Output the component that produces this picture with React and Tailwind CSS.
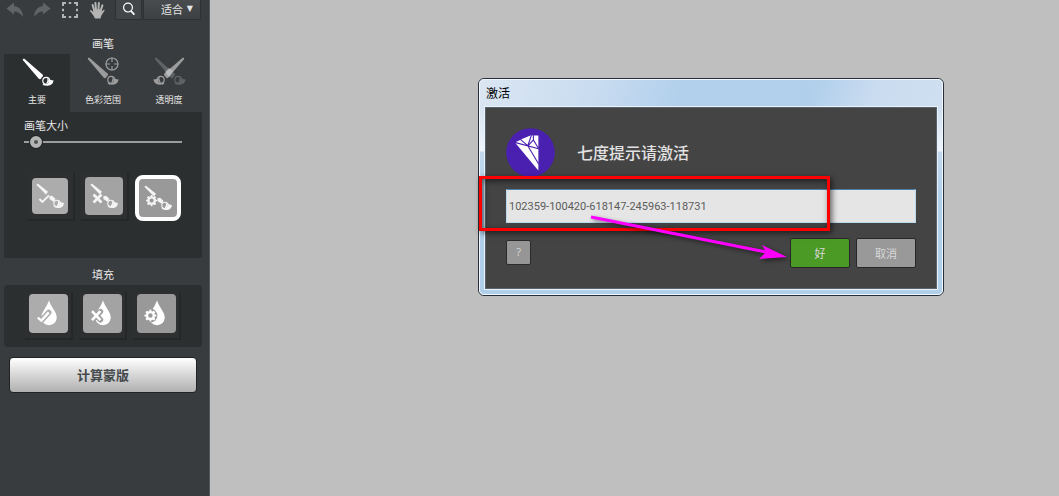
import React, { useState } from 'react';

function Brush({ className = '' }) {
  return (
    <g className={className}>
      <path d="M0.8 2 Q0.6 0.4 2.4 0.8 L20.8 16.8 Q21.4 17.6 20.6 18.6 L18.6 21 Q17.8 21.6 16.8 20.8 Z" fill="currentColor" />
      <path d="M26.6 20.2 Q28.2 22.6 31.6 22.6 Q30.8 27.4 25.6 27.8 Q22.6 27.8 20.4 27 L22 25.4 Q25.6 27 27.2 24.2 Z" fill="currentColor" />
      <circle cx="24.2" cy="22.8" r="3.4" fill="none" stroke="currentColor" strokeWidth="1.2" />
      <path d="M24.8 20 Q26.4 22.4 24 25.6 Q26.8 25.4 27 22.8 Q26.8 20.8 24.8 20 Z" fill="currentColor" />
    </g>
  );
}

const GEAR = 'M7 0h2l.4 2 1.5.6L12.6 1.4 14.6 3.4 13.4 5.1 14 6.6l2 .4v2l-2 .4-.6 1.5 1.2 1.7-2 2-1.7-1.2-1.5.6L9 16H7l-.4-2-1.5-.6-1.7 1.2-2-2 1.2-1.7L2 9.4 0 9V7l2-.4.6-1.5L1.4 3.4l2-2 1.7 1.2L6.6 2ZM8 5a3 3 0 1 0 0 6 3 3 0 0 0 0-6Z';

function Mark({ kind }) {
  if (kind === 'check') return <path d="M1.4 6 L4.4 9 L11 2.4" fill="none" stroke="currentColor" strokeWidth="1.8" />;
  if (kind === 'cross') return <path d="M1.5 1.5 L9.5 9.5 M9.5 1.5 L1.5 9.5" fill="none" stroke="currentColor" strokeWidth="2.6" />;
  return <path d={GEAR} transform="scale(0.7)" fill="currentColor" fillRule="evenodd" />;
}

function BrushMark({ kind }) {
  return (
    <svg viewBox="0 0 30 28" className="w-[30px] h-7 shrink-0 text-[#f5f5f5]" aria-hidden="true">
      <path d="M1.6 3 Q1.8 1.4 3.4 2 L13 9.8 L11 12.4 Z" fill="currentColor" />
      <path d="M14.4 14.2 L17 13.8 L20.4 16.8 Q20 18.8 18.4 19.8 L14.4 17 Z" fill="currentColor" />
      <path d="M24.6 19.6 Q26 21 29 21 Q28.4 25.4 24.4 26 Q21 26.2 18.6 24.8 L20 23.6 Q23.6 25 25 22.6 Z" fill="currentColor" />
      <circle cx="22" cy="21.4" r="3.2" fill="none" stroke="currentColor" strokeWidth="1.1" />
      <path d="M22.6 18.8 Q24 21.4 21.8 24 Q24.8 24 24.8 21.4 Q24.6 19.4 22.6 18.8 Z" fill="currentColor" />
      <g transform="translate(3 11)">
        <Mark kind={kind} />
      </g>
    </svg>
  );
}

function DropMark({ kind }) {
  return (
    <svg viewBox="0 0 24 26" className="w-6 h-[26px] text-white" aria-hidden="true">
      <path d="M13 0.5 Q14.5 5 18.4 10.8 Q21 14.6 20.8 17.8 Q20 24.6 13 25.2 Q6 24.6 5.2 17.8 Q5 14.6 7.6 10.8 Q11.5 5 13 0.5 Z" fill="currentColor" />
      {kind === 'check' && (
        <>
          <path d="M2.4 17.4 L5.6 20.4 L12.8 12.4" fill="none" stroke="#acacac" strokeWidth="5.4" strokeLinecap="round" strokeLinejoin="round" />
          <path d="M1.8 17.6 L5.4 20.6 L12.8 12.4" fill="none" stroke="#fff" strokeWidth="2.4" />
        </>
      )}
      {kind === 'cross' && (
        <>
          <path d="M2.6 11.6 L10.4 19.8 M10.4 11.6 L2.6 19.8" fill="none" stroke="#a3a3a3" strokeWidth="5.6" strokeLinecap="round" />
          <path d="M2 11.2 L10.4 20.2 M10.4 11.2 L2 20.2" fill="none" stroke="#fff" strokeWidth="2.6" />
        </>
      )}
      {kind === 'gear' && (
        <>
          <circle cx="6.4" cy="15.6" r="7" fill="#999" />
          <path d={GEAR} transform="translate(0.4 9.6) scale(0.75)" fill="#fff" fillRule="evenodd" />
        </>
      )}
    </svg>
  );
}

function Toolbar() {
  return (
    <div className="flex h-5 pl-[6px] text-[#b4b4b4]">
      <button aria-label="撤销" className="w-[18px] text-[#606466]">
        <svg viewBox="0 0 18 16" className="w-[18px] h-4">
          <path d="M0.5 6.5 L8 0.5 V4 Q16.5 5 17 15 Q13.5 9.4 8 9.4 V12.6 Z" fill="currentColor" />
        </svg>
      </button>
      <button aria-label="重做" className="w-[18px] ml-[9px] text-[#606466]">
        <svg viewBox="0 0 18 16" className="w-[18px] h-4">
          <path d="M17.5 6.5 L10 0.5 V4 Q1.5 5 1 15 Q4.5 9.4 10 9.4 V12.6 Z" fill="currentColor" />
        </svg>
      </button>
      <button aria-label="选框" className="w-4 ml-[11px]">
        <svg viewBox="0 0 16 16" className="w-4 h-4">
          <path d="M1 4 V1 H4 M12 1 H15 V4 M15 12 V15 H12 M4 15 H1 V12 M6.8 1 H9.2 M6.8 15 H9.2 M1 6.8 V9.2 M15 6.8 V9.2" fill="none" stroke="currentColor" strokeWidth="2" />
        </svg>
      </button>
      <button aria-label="抓手" className="w-4 ml-[11px]">
        <svg viewBox="0 0 16 17" className="w-4 h-[17px]">
          <path d="M5.2 8.5 L3.6 3 M7 8 L6.4 1 M9.4 8 L9.9 1 M11.6 9 L13.4 3.4" stroke="currentColor" strokeWidth="2" strokeLinecap="round" />
          <path d="M4 7.5 H12.6 L12.8 9.6 L14.4 8 Q15.8 7.2 15.6 8.4 L12.4 13.6 L11.4 16.6 H6 L4.4 13.6 L1 9 Q0.8 7.8 2.2 8.2 L4.4 10 Z" fill="currentColor" />
        </svg>
      </button>
      <button aria-label="缩放" className="flex w-[27px] ml-2.5 justify-center border-x border-b border-[#2e3132] bg-[#424648] rounded-b-xs text-white">
        <svg viewBox="0 0 14 16" className="w-3.5 h-4">
          <circle cx="6" cy="7.6" r="4.4" fill="none" stroke="currentColor" strokeWidth="1.2" />
          <path d="M9 11 L12.4 14.6" stroke="currentColor" strokeWidth="1.8" />
        </svg>
      </button>
      <label className="grid w-[58px] ml-px border-x border-b border-[#2e3132] bg-gradient-to-b from-[#484c4e] to-[#3d4143] rounded-b-xs text-[#e6e6e6]">
        <select aria-label="缩放比例" className="col-start-1 row-start-1 appearance-none bg-transparent h-[18px] pl-[17px] text-[11px] outline-none">
          <option>适合</option>
        </select>
        <span className="col-start-1 row-start-1 justify-self-end pr-[7px] font-['DejaVu_Sans',sans-serif] text-[8px] leading-[18px] pointer-events-none">▼</span>
      </label>
    </div>
  );
}

function Tab({ label, active, onClick, children }) {
  return (
    <button
      role="tab"
      aria-selected={active}
      onClick={onClick}
      className={`flex flex-1 flex-col items-center h-[58px] pt-[3px] ${active ? 'bg-[#2c2f30]' : ''}`}
    >
      <svg viewBox="0 0 34 30" className={`w-[34px] h-[30px] ${active ? 'text-white' : 'text-[#9c9c9c]'}`} aria-hidden="true">
        {children}
      </svg>
      <span className="mt-[5px] text-[9px] leading-4 text-[#e6e6e6]">{label}</span>
    </button>
  );
}

function BrushTabs() {
  const [tab, setTab] = useState(0);
  return (
    <div role="tablist" className="flex">
      <Tab label="主要" active={tab === 0} onClick={() => setTab(0)}>
        <g transform="translate(2 1)"><Brush /></g>
      </Tab>
      <Tab label="色彩范围" active={tab === 1} onClick={() => setTab(1)}>
        <g transform="translate(1 0)"><Brush /></g>
        <circle cx="26" cy="7" r="6" fill="none" stroke="currentColor" strokeWidth="1.2" />
        <path d="M26 0.5 V5 M26 9 V13.5 M19.5 7 H24 M28 7 H32.5" stroke="currentColor" strokeWidth="1.2" />
      </Tab>
      <Tab label="透明度" active={tab === 2} onClick={() => setTab(2)}>
        <g transform="translate(2 0)"><Brush className="text-[#606365]" /></g>
        <g transform="translate(33 0) scale(-1 1)"><Brush /></g>
        <path d="M13 15 L17 11 L21 14 L17 20 Z" fill="#cfcfcf" opacity="0.6" />
      </Tab>
    </div>
  );
}

function Cell({ children }) {
  return (
    <div className="flex shrink-0 items-center justify-center w-12 h-12 border-r-2 border-b-2 border-[#252728] bg-[#2d2f31]">
      {children}
    </div>
  );
}

function Sidebar() {
  return (
    <aside className="w-[210px] shrink-0 pr-[7px] bg-[#393c3e] border-r border-[#55585a] text-[#e6e6e6]">
      <Toolbar />
      <div className="pl-1">
        <h2 className="pt-[15px] pb-[3px] text-center text-[11px] leading-4">画笔</h2>
        <BrushTabs />
        <section className="h-[146px] px-5 pt-[5px] bg-[#2c2f30] rounded-b-xs">
          <label htmlFor="brush-size" className="block text-[11px] leading-4">画笔大小</label>
          <input
            id="brush-size"
            type="range"
            min="0"
            max="100"
            defaultValue="4"
            className="block w-full h-3 mt-[3px] appearance-none bg-transparent [&::-webkit-slider-runnable-track]:h-[2px] [&::-webkit-slider-runnable-track]:bg-[#9c9c9c] [&::-webkit-slider-thumb]:appearance-none [&::-webkit-slider-thumb]:size-3 [&::-webkit-slider-thumb]:-mt-[5px] [&::-webkit-slider-thumb]:rounded-full [&::-webkit-slider-thumb]:border-4 [&::-webkit-slider-thumb]:border-[#b4b4b4] [&::-webkit-slider-thumb]:bg-[#505354] [&::-webkit-slider-thumb]:shadow-[0_0_0_1px_#1f2223]"
          />
          <div className="flex gap-1.5 mt-[25px] ml-[3px]">
            <Cell>
              <button aria-label="保留画笔" className="flex items-center justify-center size-9 rounded-sm bg-[#acacac]"><BrushMark kind="check" /></button>
            </Cell>
            <Cell>
              <button aria-label="删除画笔" className="flex items-center justify-center size-[38px] rounded-sm bg-[#a3a3a3]"><BrushMark kind="cross" /></button>
            </Cell>
            <button aria-label="计算画笔" className="flex shrink-0 self-end items-center justify-center size-[46px] rounded-lg border-4 border-white bg-[#999]"><BrushMark kind="gear" /></button>
          </div>
        </section>

        <h2 className="pt-2 pb-[3px] text-center text-[11px] leading-4">填充</h2>
        <section className="flex gap-1.5 h-[62px] pl-[21px] pt-[7px] bg-[#2c2f30] rounded-sm">
          <Cell>
            <button aria-label="保留填充" className="flex items-center justify-center size-[39px] mb-1 rounded-sm bg-[#acacac]"><DropMark kind="check" /></button>
          </Cell>
          <Cell>
            <button aria-label="删除填充" className="flex items-center justify-center size-[39px] mb-1 rounded-sm bg-[#a3a3a3]"><DropMark kind="cross" /></button>
          </Cell>
          <Cell>
            <button aria-label="计算填充" className="flex items-center justify-center size-[39px] mb-1 rounded-sm bg-[#999]"><DropMark kind="gear" /></button>
          </Cell>
        </section>

        <div className="px-[5px] pt-2.5">
          <button className="block w-full h-9 rounded-sm border border-[#202223] bg-gradient-to-b from-white to-[#b0b0b0] text-[13px] font-bold text-[#44494c]">
            计算蒙版
          </button>
        </div>
      </div>
    </aside>
  );
}

function Logo() {
  return (
    <svg viewBox="0 0 49 49" className="size-[49px]" aria-hidden="true">
      <circle cx="24.5" cy="24.5" r="24.3" fill="#4a20b0" />
      <path d="M9 14.4 L17.2 10.4 L24.4 7.6 H32.4 V42.4 L30.6 40.6 Z" fill="#fff" />
      <path d="M8.6 14.4 L32.6 20.8 M25.4 7.2 L21.8 17.8 L32.6 36 M14.6 11.6 L22 17.8 M27.4 7.2 L27.4 12 L32.8 20.8 M22 17.8 L27.6 11.6" fill="none" stroke="#4a20b0" strokeWidth="1.1" />
    </svg>
  );
}

function ActivationDialog() {
  const [code, setCode] = useState('102359-100420-618147-245963-118731');
  return (
    <div
      role="dialog"
      aria-labelledby="activation-title"
      className="relative w-full max-w-[466px] rounded-md border border-[#27303a] bg-[linear-gradient(110deg,#dbe6f2_0%,#c9dcf0_22%,#b2d0ec_38%,#b0cfeb_62%,#cadcf0_74%,#d4e2f1_100%)]"
    >
      <div className="rounded-[5px] border border-[#f2f8fd] px-1 pb-1 bg-[linear-gradient(180deg,transparent_30px,#eff5fb_71px,#c3d9ee_72px,#b0cfeb_120px)]">
        <h1 id="activation-title" className="h-[26px] pl-0.5 text-[12px] leading-[25px] text-black">激活</h1>
        <div className="border border-[#e9f2fa]">
          <div className="border border-[#59636e] bg-[#444] p-5">
            <div className="flex items-center gap-[22px]">
              <Logo />
              <label htmlFor="activation-code" className="pb-0.5 text-[16px] leading-6 font-medium text-[#e2e2e2]">七度提示请激活</label>
            </div>
            <input
              id="activation-code"
              value={code}
              onChange={(e) => setCode(e.target.value)}
              className="block w-full h-[34px] mt-3 px-0.5 border border-[#b9d9ef] border-t-[#4d80aa] bg-[#e5e5e5] font-[Roboto,sans-serif] text-[11px] text-[#5c5c5c] outline-none"
            />
            <div className="flex mt-[15px] text-[11px] text-[#d8d8d8]">
              <button aria-label="帮助" className="mt-0.5 size-[25px] rounded-xs border border-[#2b2b2b] bg-[#969696] font-['Open_Sans',sans-serif]">?</button>
              <button className="ml-auto w-[60px] h-[30px] rounded-xs border border-[#262626] bg-[#4c9a26]">好</button>
              <button className="ml-1.5 w-[60px] h-[30px] rounded-xs border border-[#262626] bg-[#999]">取消</button>
            </div>
          </div>
        </div>
      </div>

      {/* Highlight and arrow laid over the dialog */}
      <div className="absolute left-0 top-[97px] w-[351px] h-[55px] border-3 border-[#ff0000] shadow-[2px_2px_6px_#0009,inset_2px_2px_6px_#0009] pointer-events-none"></div>
      <svg viewBox="0 0 200 50" className="absolute left-[111px] top-[135px] w-[200px] h-[50px] drop-shadow-[2px_2px_2px_#0008] pointer-events-none" aria-hidden="true">
        <path d="M1 3 L176 38" stroke="#ff00ff" strokeWidth="3" />
        <path d="M197 43 L172 31 L176 38 L169 45 Z" fill="#ff00ff" />
      </svg>
    </div>
  );
}

export default function App() {
  return (
    <div className="flex min-h-screen bg-[#bfbfbf] font-['Noto_Sans_CJK_SC',sans-serif]">
      <Sidebar />
      <main className="flex-1 pl-[268px] pt-[78px]">
        <ActivationDialog />
      </main>
    </div>
  );
}
